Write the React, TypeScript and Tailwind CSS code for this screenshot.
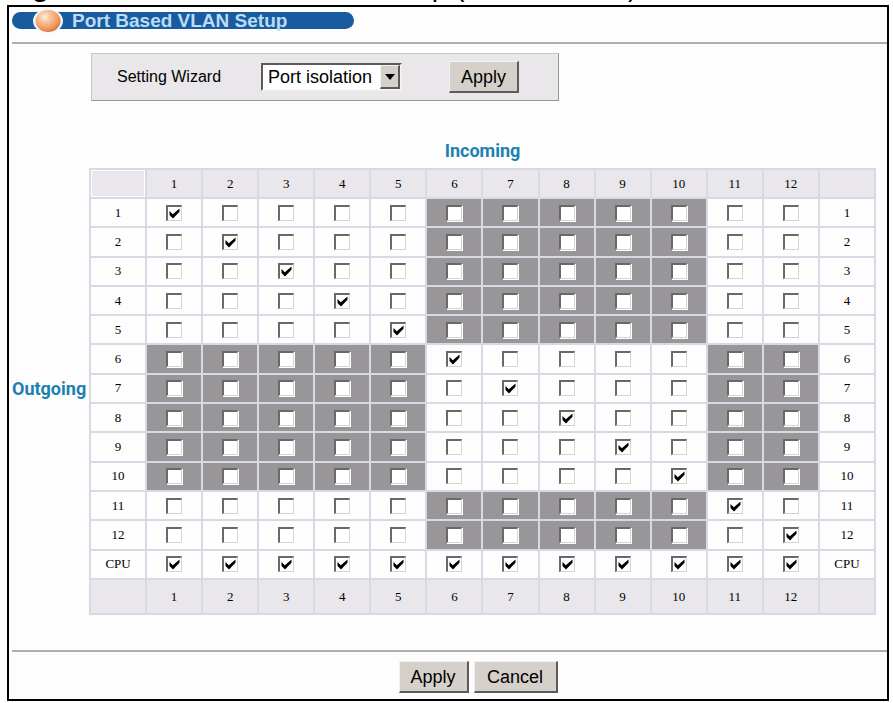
import React, { useState } from 'react';

const PORTS = [1, 2, 3, 4, 5, 6, 7, 8, 9, 10, 11, 12];
const ROWS = [...PORTS.map(String), 'CPU'];

// Ports 6-10 form their own group, apart from 1-5 and 11-12
const inMiddleGroup = (port: number) => port >= 6 && port <= 10;

const isShaded = (row: string, port: number) =>
    row !== 'CPU' && inMiddleGroup(Number(row)) !== inMiddleGroup(port);

const initialMatrix = ROWS.map(row => PORTS.map(port => row === 'CPU' || Number(row) === port));

interface PortCheckboxProps {
    label: string;
    checked: boolean;
    onChange: () => void;
}

const PortCheckbox: React.FC<PortCheckboxProps> = ({ label, checked, onChange }) => (
    <span className="grid w-4 h-4 mx-auto">
        <input
            type="checkbox"
            aria-label={label}
            checked={checked}
            onChange={onChange}
            className="peer appearance-none col-start-1 row-start-1 w-4 h-4 bg-white border-t-2 border-l-2 border-r border-b border-t-[#6a6868] border-l-[#6a6868] border-r-[#d6d3d0] border-b-[#d6d3d0] shadow-[1px_1px_0_#fff]"
        />
        <svg
            viewBox="0 0 16 16"
            className="invisible peer-checked:visible pointer-events-none col-start-1 row-start-1 w-4 h-4"
            aria-hidden="true"
        >
            <path d="M3.5 6 L6.8 9.2 L13.5 3.6 V6.8 L7 13.6 L3.5 10 Z" fill="#000" />
        </svg>
    </span>
);

interface ClassicButtonProps {
    children: React.ReactNode;
    wide?: boolean;
}

const ClassicButton: React.FC<ClassicButtonProps> = ({ children, wide }) => (
    <button
        type="button"
        className={`${wide ? 'w-[84px]' : 'w-[70px]'} h-8 bg-[#d5d0c9] text-[18px] leading-6 text-black border-t border-l border-r-2 border-b-2 border-t-[#f4f2f0] border-l-[#f4f2f0] border-r-[#5c5a5a] border-b-[#5c5a5a]`}
    >
        {children}
    </button>
);

const Orb: React.FC = () => (
    <svg width="30" height="24" viewBox="0 0 30 24" className="shrink-0" aria-hidden="true">
        <defs>
            <radialGradient id="orb" cx="0.38" cy="0.32" r="0.7">
                <stop offset="0" stopColor="#fff0e0" />
                <stop offset="0.35" stopColor="#f8c29a" />
                <stop offset="0.75" stopColor="#f09a60" />
                <stop offset="1" stopColor="#cc7a48" />
            </radialGradient>
        </defs>
        <ellipse cx="15" cy="12" rx="15" ry="12" fill="#f4f5f8" />
        <ellipse cx="15" cy="12" rx="12.5" ry="11" fill="url(#orb)" />
    </svg>
);

const PortHeaderRow: React.FC<{ position: 'top' | 'bottom' }> = ({ position }) => (
    <tr className={`${position === 'top' ? 'h-[29px]' : 'h-[35px]'} bg-[#e9e7eb]`}>
        <td
            className={`border-2 border-[#d7d9e4] ${position === 'top' ? 'shadow-[inset_0_0_0_1px_#fff]' : ''}`}
        />
        {PORTS.map(port => (
            <th key={port} scope="col" className="border-2 border-[#d7d9e4] font-normal">{port}</th>
        ))}
        <td className="border-2 border-[#d7d9e4]" />
    </tr>
);

const App: React.FC = () => {
    const [wizard, setWizard] = useState<string>('isolation');
    const [matrix, setMatrix] = useState<boolean[][]>(initialMatrix);

    const toggle = (rowIndex: number, colIndex: number) => {
        setMatrix(prev =>
            prev.map((row, r) => (r === rowIndex ? row.map((v, c) => (c === colIndex ? !v : v)) : row))
        );
    };

    return (
        <div className="overflow-hidden bg-white pl-[7px] pr-1 pb-0.5 text-black font-['Liberation_Sans',Arial,sans-serif]">
            {/* Caption runs off the top of the page, only its descenders stay in view */}
            <div className="flex items-end h-[5px] pb-[4px] text-[28px] leading-7 whitespace-nowrap">
                <span className="w-[140px] shrink-0 font-bold">Figure</span>
                <span>Port Based VLAN Setup (Port Isolation)</span>
            </div>

            <main className="border-2 border-black bg-[#fdfdfd] pl-[3px] pt-[5px] pb-1.5">
                <header className="flex items-center gap-[9px] w-[342px] h-[17px] pl-[21px] rounded-full bg-[#185b9f]">
                    <Orb />
                    <h1 className="text-[19px] leading-5 font-bold text-[#bcdcf4] whitespace-nowrap">Port Based VLAN Setup</h1>
                </header>

                <hr className="mt-[13px] border-t-2 border-[#adadad]" />

                <form className="flex items-center w-fit h-12 mt-[9px] ml-[79px] pl-[25px] pr-[39px] bg-[#e9e7e9] border border-t-[#c6c6c6] border-l-[#c6c6c6] border-r-[#989898] border-b-[#989898]">
                    <label htmlFor="wizard" className="w-36 text-[16px]">Setting Wizard</label>
                    <div className="relative w-[141px] mr-[47px]">
                        <select
                            id="wizard"
                            value={wizard}
                            onChange={e => setWizard(e.target.value)}
                            className="appearance-none block w-full h-7 pl-[5px] bg-white text-[18px] leading-6 border-2 border-t-[#5c5a5a] border-l-[#5c5a5a] border-r-[#f4f2f0] border-b-[#f4f2f0]"
                        >
                            <option value="isolation">Port isolation</option>
                            <option value="all">All connected</option>
                        </select>
                        <span className="absolute right-0.5 top-0.5 bottom-0.5 flex items-center justify-center w-5 pointer-events-none bg-[#d5d0c9] border-t border-l border-r-2 border-b-2 border-t-[#f4f2f0] border-l-[#f4f2f0] border-r-[#5c5a5a] border-b-[#5c5a5a]">
                            <svg width="10" height="6" viewBox="0 0 10 6" aria-hidden="true">
                                <path d="M0 0 H10 L5 6 Z" fill="#000" />
                            </svg>
                        </span>
                    </div>
                    <ClassicButton>Apply</ClassicButton>
                </form>

                <div className="grid grid-cols-[76px_1fr] gap-x-px mt-[38px] pr-[11px] text-[18px] font-bold text-[#1c80b2] font-[Roboto,Arial,sans-serif]">
                    <div className="col-start-2 h-[29px] leading-6 text-center">Incoming</div>
                    <div className="col-start-1 self-center pb-1.5 leading-6">Outgoing</div>
                    <table className="w-full h-[447px] table-fixed border-collapse text-center text-[13px] leading-4 font-normal text-black font-['Liberation_Serif','Times_New_Roman',serif]">
                        <thead>
                            <PortHeaderRow position="top" />
                        </thead>
                        <tbody>
                            {ROWS.map((row, r) => (
                                <tr key={row} className="h-[29px]">
                                    <th scope="row" className="border-2 border-[#d7d9e4] font-normal">{row}</th>
                                    {PORTS.map((port, c) => (
                                        <td
                                            key={port}
                                            className={`border-2 border-[#d7d9e4] ${isShaded(row, port) ? 'bg-[#989698]' : ''}`}
                                        >
                                            <PortCheckbox
                                                label={`Outgoing ${row}, incoming ${port}`}
                                                checked={matrix[r][c]}
                                                onChange={() => toggle(r, c)}
                                            />
                                        </td>
                                    ))}
                                    <td className="border-2 border-[#d7d9e4]">{row}</td>
                                </tr>
                            ))}
                        </tbody>
                        <tfoot>
                            <PortHeaderRow position="bottom" />
                        </tfoot>
                    </table>
                </div>

                <hr className="mt-[35px] border-t-2 border-[#adadad]" />

                <div className="flex justify-center gap-[5px] pl-[57px] mt-[9px]">
                    <ClassicButton>Apply</ClassicButton>
                    <ClassicButton wide>Cancel</ClassicButton>
                </div>
            </main>
        </div>
    );
};

export default App;
